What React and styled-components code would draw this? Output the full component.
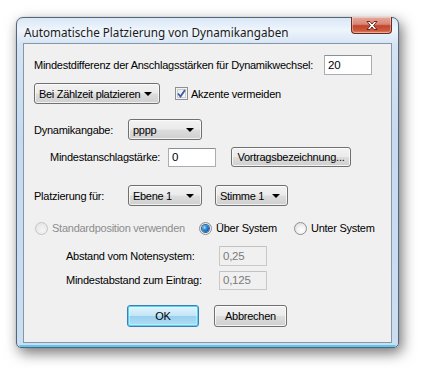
import React from "react";
import styled, { createGlobalStyle, css } from "styled-components";

const Global = createGlobalStyle`
  html, body { margin: 0; padding: 0; background: #ffffff; }
  body { width: 423px; height: 375px; overflow: hidden; }
  * { box-sizing: border-box; }
`;

const UI_FONT = `"Liberation Sans", Arial, sans-serif`;

const Page = styled.div`
  padding: 17px 0 0 16px;
`;

const Window = styled.div`
  width: 383px;
  height: 331px;
  border: 1px solid #55667a;
  border-radius: 7px 7px 5px 5px;
  background: linear-gradient(180deg, #dae7f6 0px, #eef5fc 12px, #d5e4f4 26px, #c6daf0 120px, #cbdff3 100%);
  box-shadow: 3px 5px 14px rgba(0, 0, 0, 0.55), 0 0 1px rgba(0,0,0,0.3);
  display: flex;
  flex-direction: column;
  padding: 0 6px 4px 6px;
  position: relative;
  &::after {
    content: "";
    position: absolute;
    left: 2px; right: 2px; bottom: 0px; height: 2px;
    border-radius: 0 0 4px 4px;
    background: #5fc6ef;
  }
`;

const TitleBar = styled.div`
  height: 25px;
  display: flex;
  align-items: flex-start;
  justify-content: space-between;
`;

const Title = styled.div`
  font-family: "Noto Sans", "Open Sans", sans-serif;
  font-size: 11.7px;
  color: #1a1a1a;
  padding: 6px 0 0 1px;
  text-shadow: 0 0 6px rgba(255,255,255,0.9);
`;

const CloseButton = styled.div`
  width: 41px;
  height: 17px;
  margin-top: -1px;
  border: 1px solid #6b2a20;
  border-top: none;
  border-radius: 0 0 4px 4px;
  background: linear-gradient(180deg, #e9a99b 0%, #d88674 45%, #c1442d 55%, #cf5b3e 85%, #e08a68 100%);
  box-shadow: inset 0 0 0 1px rgba(255,255,255,0.35);
  display: flex;
  align-items: center;
  justify-content: center;
`;

const Client = styled.div`
  flex: 1;
  border: 1px solid #8696a8;
  background: #f0f0f0;
  display: flex;
  flex-direction: column;
  font-family: ${UI_FONT};
  font-size: 11px;
  letter-spacing: -0.25px;
  color: #000;
`;

const Row = styled.div`
  display: flex;
  align-items: center;
  margin-top: ${(p) => p.$mt}px;
  padding-left: ${(p) => p.$indent}px;
  height: ${(p) => p.$h || 20}px;
`;

const Label = styled.span`
  display: inline-block;
  width: ${(p) => (p.$w ? `${p.$w}px` : "auto")};
  white-space: nowrap;
  color: ${(p) => (p.$disabled ? "#8d8d8d" : "#000")};
`;

const TextBox = styled.div`
  width: ${(p) => p.$w}px;
  height: ${(p) => p.$h || 20}px;
  border: 1px solid ${(p) => (p.$disabled ? "#c9c9c9" : "#abadb3")};
  border-top-color: ${(p) => (p.$disabled ? "#c2c2c2" : "#8c8f96")};
  border-radius: 1px;
  background: ${(p) => (p.$disabled ? "#f0f0f0" : "#ffffff")};
  color: ${(p) => (p.$disabled ? "#7a7a7a" : "#000")};
  padding: 0 0 0 3px;
  display: flex;
  align-items: center;
  font-size: 11.5px;
`;

const Combo = styled.div`
  width: ${(p) => p.$w}px;
  height: 21px;
  margin-left: ${(p) => p.$ml || 0}px;
  border: 1px solid #707070;
  border-radius: 3px;
  background: linear-gradient(180deg, #f2f2f2 0%, #ebebeb 48%, #dddddd 52%, #cfcfcf 100%);
  box-shadow: inset 0 0 0 1px rgba(255,255,255,0.7);
  display: flex;
  align-items: center;
  justify-content: space-between;
  padding: 0 7px 0 4px;
  white-space: nowrap;
  font-size: 11px;
  letter-spacing: -0.3px;
`;

const Arrow = styled.span`
  width: 0;
  height: 0;
  flex-shrink: 0;
  border-left: 4px solid transparent;
  border-right: 4px solid transparent;
  border-top: 4px solid #000;
`;

const buttonBase = css`
  height: ${(p) => p.$h || 21}px;
  width: ${(p) => p.$w}px;
  margin-left: ${(p) => p.$ml || 0}px;
  border-radius: 3px;
  display: flex;
  align-items: center;
  justify-content: center;
  white-space: nowrap;
  font-size: 11px;
`;

const Button = styled.div`
  ${buttonBase};
  border: 1px solid #707070;
  background: linear-gradient(180deg, #f2f2f2 0%, #ebebeb 48%, #dddddd 52%, #cfcfcf 100%);
  box-shadow: inset 0 0 0 1px rgba(255,255,255,0.75);
`;

const DefaultButton = styled.div`
  ${buttonBase};
  border: 1px solid #3c7fb1;
  background: linear-gradient(180deg, #e5f4fc 0%, #c4e5f6 48%, #98d1ef 52%, #b6dcf3 100%);
  box-shadow: inset 0 0 0 1px #48d8fb, inset 0 0 0 2px rgba(255,255,255,0.3);
`;

const Check = styled.div`
  width: 13px;
  height: 13px;
  margin-left: ${(p) => p.$ml || 0}px;
  margin-right: 3px;
  border: 1px solid #8f8f8f;
  background: linear-gradient(135deg, #e6e6e6, #ffffff);
  box-shadow: inset 0 0 0 1px #f4f4f4, inset 0 0 0 2px #c6cbd6;
  display: flex;
  align-items: center;
  justify-content: center;
`;

const RadioItem = styled.div`
  display: flex;
  align-items: center;
  width: ${(p) => (p.$w ? `${p.$w}px` : "auto")};
`;

const RadioCircle = styled.div`
  width: 13px;
  height: 13px;
  border-radius: 50%;
  margin-right: 4px;
  border: 1px solid ${(p) => (p.$disabled ? "#c4c4c4" : "#8e8f8f")};
  background: ${(p) =>
    p.$disabled
      ? "radial-gradient(circle at 60% 65%, #f4f4f4, #e2e2e2)"
      : "radial-gradient(circle at 60% 65%, #ffffff 0%, #f2f2f2 40%, #d4d4d4 100%)"};
  display: flex;
  align-items: center;
  justify-content: center;
  flex-shrink: 0;
`;

const RadioDot = styled.div`
  width: 7px;
  height: 7px;
  border-radius: 50%;
  background: radial-gradient(circle at 35% 35%, #9ad8ff 0%, #1f7fd0 45%, #0b3d91 100%);
  box-shadow: 0 0 0 1px #35638f;
`;

const ButtonRow = styled.div`
  display: flex;
  margin-top: ${(p) => p.$mt}px;
  padding-left: ${(p) => p.$indent}px;
`;

function Radio({ label, checked, disabled, w }) {
  return (
    <RadioItem $w={w}>
      <RadioCircle $disabled={disabled}>{checked && <RadioDot />}</RadioCircle>
      <Label $disabled={disabled}>{label}</Label>
    </RadioItem>
  );
}

export default function App() {
  return (
    <>
      <Global />
      <Page>
        <Window>
          <TitleBar>
            <Title>Automatische Platzierung von Dynamikangaben</Title>
            <CloseButton>
              <svg width="14" height="11" viewBox="0 0 14 11">
                <path
                  d="M2 1.5 L5 1.5 L7 4 L9 1.5 L12 1.5 L8.6 5.5 L12 9.5 L9 9.5 L7 7 L5 9.5 L2 9.5 L5.4 5.5 Z"
                  fill="#ffffff"
                  stroke="#5a1c12"
                  strokeWidth="0.9"
                  strokeLinejoin="round"
                />
              </svg>
            </CloseButton>
          </TitleBar>
          <Client>
            <Row $mt={11} $indent={10}>
              <Label $w={290}>Mindestdifferenz der Anschlagsstärken für Dynamikwechsel:</Label>
              <TextBox $w={48}>20</TextBox>
            </Row>
            <Row $mt={8} $indent={10} $h={21}>
              <Combo $w={126}>
                <span>Bei Zählzeit platzieren</span>
                <Arrow />
              </Combo>
              <Check $ml={15}>
                <svg width="9" height="9" viewBox="0 0 9 9">
                  <path d="M1 4.5 L3.5 7.5 L8 1" fill="none" stroke="#3b5aa0" strokeWidth="1.8" />
                </svg>
              </Check>
              <Label>Akzente vermeiden</Label>
            </Row>
            <Row $mt={15} $indent={10} $h={21}>
              <Label $w={94}>Dynamikangabe:</Label>
              <Combo $w={74}>
                <span>pppp</span>
                <Arrow />
              </Combo>
            </Row>
            <Row $mt={7} $indent={26}>
              <Label $w={118}>Mindestanschlagstärke:</Label>
              <TextBox $w={48} $h={19}>0</TextBox>
              <Button $w={120} $h={20} $ml={15}>Vortragsbezeichnung...</Button>
            </Row>
            <Row $mt={18} $indent={10} $h={21}>
              <Label $w={94}>Platzierung für:</Label>
              <Combo $w={74}>
                <span>Ebene 1</span>
                <Arrow />
              </Combo>
              <Combo $w={73} $ml={13}>
                <span>Stimme 1</span>
                <Arrow />
              </Combo>
            </Row>
            <Row $mt={15} $indent={11} $h={14}>
              <Radio w={164} label="Standardposition verwenden" disabled />
              <Radio w={95} label="Über System" checked />
              <Radio label="Unter System" />
            </Row>
            <Row $mt={11} $indent={42}>
              <Label $w={153}>Abstand vom Notensystem:</Label>
              <TextBox $w={48} $disabled>0,25</TextBox>
            </Row>
            <Row $mt={4} $indent={42}>
              <Label $w={153}>Mindestabstand zum Eintrag:</Label>
              <TextBox $w={48} $h={19} $disabled>0,125</TextBox>
            </Row>
            <ButtonRow $mt={15} $indent={103}>
              <DefaultButton $w={72} $h={22}>OK</DefaultButton>
              <Button $w={73} $h={22} $ml={15}>Abbrechen</Button>
            </ButtonRow>
          </Client>
        </Window>
      </Page>
    </>
  );
}
